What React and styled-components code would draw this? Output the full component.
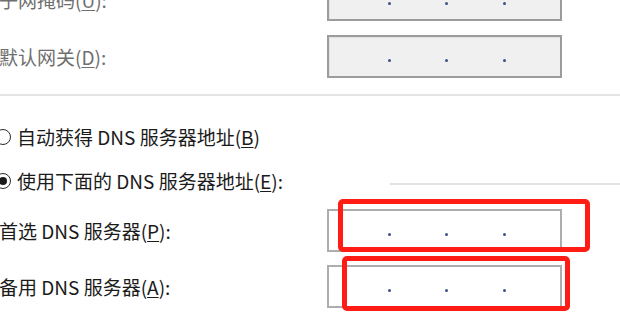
import React from "react";
import styled, { createGlobalStyle } from "styled-components";

const GlobalStyle = createGlobalStyle`
    html, body {
        margin    : 0;
        padding   : 0;
        background: #ffffff;
        overflow  : hidden;
    }
`;

export default function App() {

    return(
        <>
            <GlobalStyle />
            <Page>
                <FieldRow $top={-22}>
                    <Label $disabled>子网掩码(<Key>U</Key>):</Label>
                    <IpBox $disabled />
                </FieldRow>

                <FieldRow $top={14}>
                    <Label $disabled>默认网关(<Key>D</Key>):</Label>
                    <IpBox $disabled />
                </FieldRow>

                <Separator />

                <RadioRow $top={26}>
                    <Radio />
                    <RadioText>自动获得 DNS 服务器地址(<Key>B</Key>)</RadioText>
                </RadioRow>

                <RadioRow $top={16}>
                    <Radio $checked />
                    <RadioText>使用下面的 DNS 服务器地址(<Key>E</Key>):</RadioText>
                    <GroupLine />
                </RadioRow>

                <FieldRow $top={15}>
                    <Label>首选 DNS 服务器(<Key>P</Key>):</Label>
                    <IpBox />
                    <Highlight $left={11} $top={-10} $width={252} $height={53} />
                </FieldRow>

                <FieldRow $top={13}>
                    <Label>备用 DNS 服务器(<Key>A</Key>):</Label>
                    <IpBox />
                    <Highlight $left={15} $top={-9} $width={228} $height={55} />
                </FieldRow>
            </Page>
        </>
    )
}

function IpBox(props) {
    return(
        <Box $disabled={props.$disabled}>
            <Segment />
            <Dot />
            <Segment />
            <Dot />
            <Segment />
            <Dot />
            <Segment />
        </Box>
    )
}

const Page = styled.div`
    position : relative;
    width    : 620px;
    height   : 316px;
    overflow : hidden;

    display        : flex;
    flex-direction : column;

    font-family: "Noto Sans CJK SC", "Noto Sans", sans-serif;
    font-size  : 19px;
    color      : #1b1b1b;
`;

const FieldRow = styled.div`
    position   : relative;
    flex-shrink: 0;
    height     : 43px;
    margin-top : ${p => p.$top}px;

    display     : flex;
    align-items : center;
`;

const Label = styled.div`
    width       : 328px;
    margin-left : -1px;
    white-space : nowrap;
    line-height : 1;
    color       : ${p => p.$disabled ? "#6f6f6f" : "#1b1b1b"};
`;

const Key = styled.span`
    text-decoration: underline;
    text-underline-offset: 2px;
`;

const Box = styled.div`
    box-sizing : border-box;
    width      : 235px;
    height     : 43px;
    padding    : 0 0 0 4px;

    display     : flex;
    align-items : center;

    border    : 2px solid ${p => p.$disabled ? "#9c9c9c" : "#adadad"};
    background: ${p => p.$disabled ? "#f0f0f0" : "#ffffff"};
    ${p => p.$disabled ? "box-shadow: inset 1px 1px 0 #e2e2e2;" : ""}
`;

const Segment = styled.div`
    flex: 1;
`;

const Dot = styled.div`
    width        : 3px;
    height       : 3px;
    margin-top   : 7px;
    border-radius: 50%;
    background   : #3d4f86;
`;

const Separator = styled.div`
    flex-shrink: 0;
    height     : 2px;
    margin-top : 16px;
    background : #e4e4e4;
`;

const RadioRow = styled.div`
    position   : relative;
    flex-shrink: 0;
    height     : 28px;
    margin-top : ${p => p.$top}px;

    display     : flex;
    align-items : center;
`;

const Radio = styled.div`
    box-sizing   : border-box;
    flex-shrink  : 0;
    width        : 16px;
    height       : 16px;
    margin-left  : -5px;
    margin-right : 6px;
    margin-top   : 2px;
    border-radius: 50%;
    border       : 1.5px solid #2a2a2a;
    background   : #ffffff;

    display        : flex;
    align-items    : center;
    justify-content: center;

    &::after {
        content      : "";
        display      : ${p => p.$checked ? "block" : "none"};
        width        : 8px;
        height       : 8px;
        border-radius: 50%;
        background   : #1b1b1b;
    }
`;

const RadioText = styled.div`
    white-space : nowrap;
    line-height : 1;
`;

const GroupLine = styled.div`
    position  : absolute;
    left      : 390px;
    right     : 0;
    top       : 17px;
    height    : 2px;
    background: #e3e3e3;
`;

const Highlight = styled.div`
    position     : absolute;
    left         : ${p => 327 + p.$left}px;
    top          : ${p => p.$top}px;
    width        : ${p => p.$width}px;
    height       : ${p => p.$height}px;
    box-sizing   : border-box;
    border       : 5px solid #ff1c14;
    border-radius: 5px;
`;
